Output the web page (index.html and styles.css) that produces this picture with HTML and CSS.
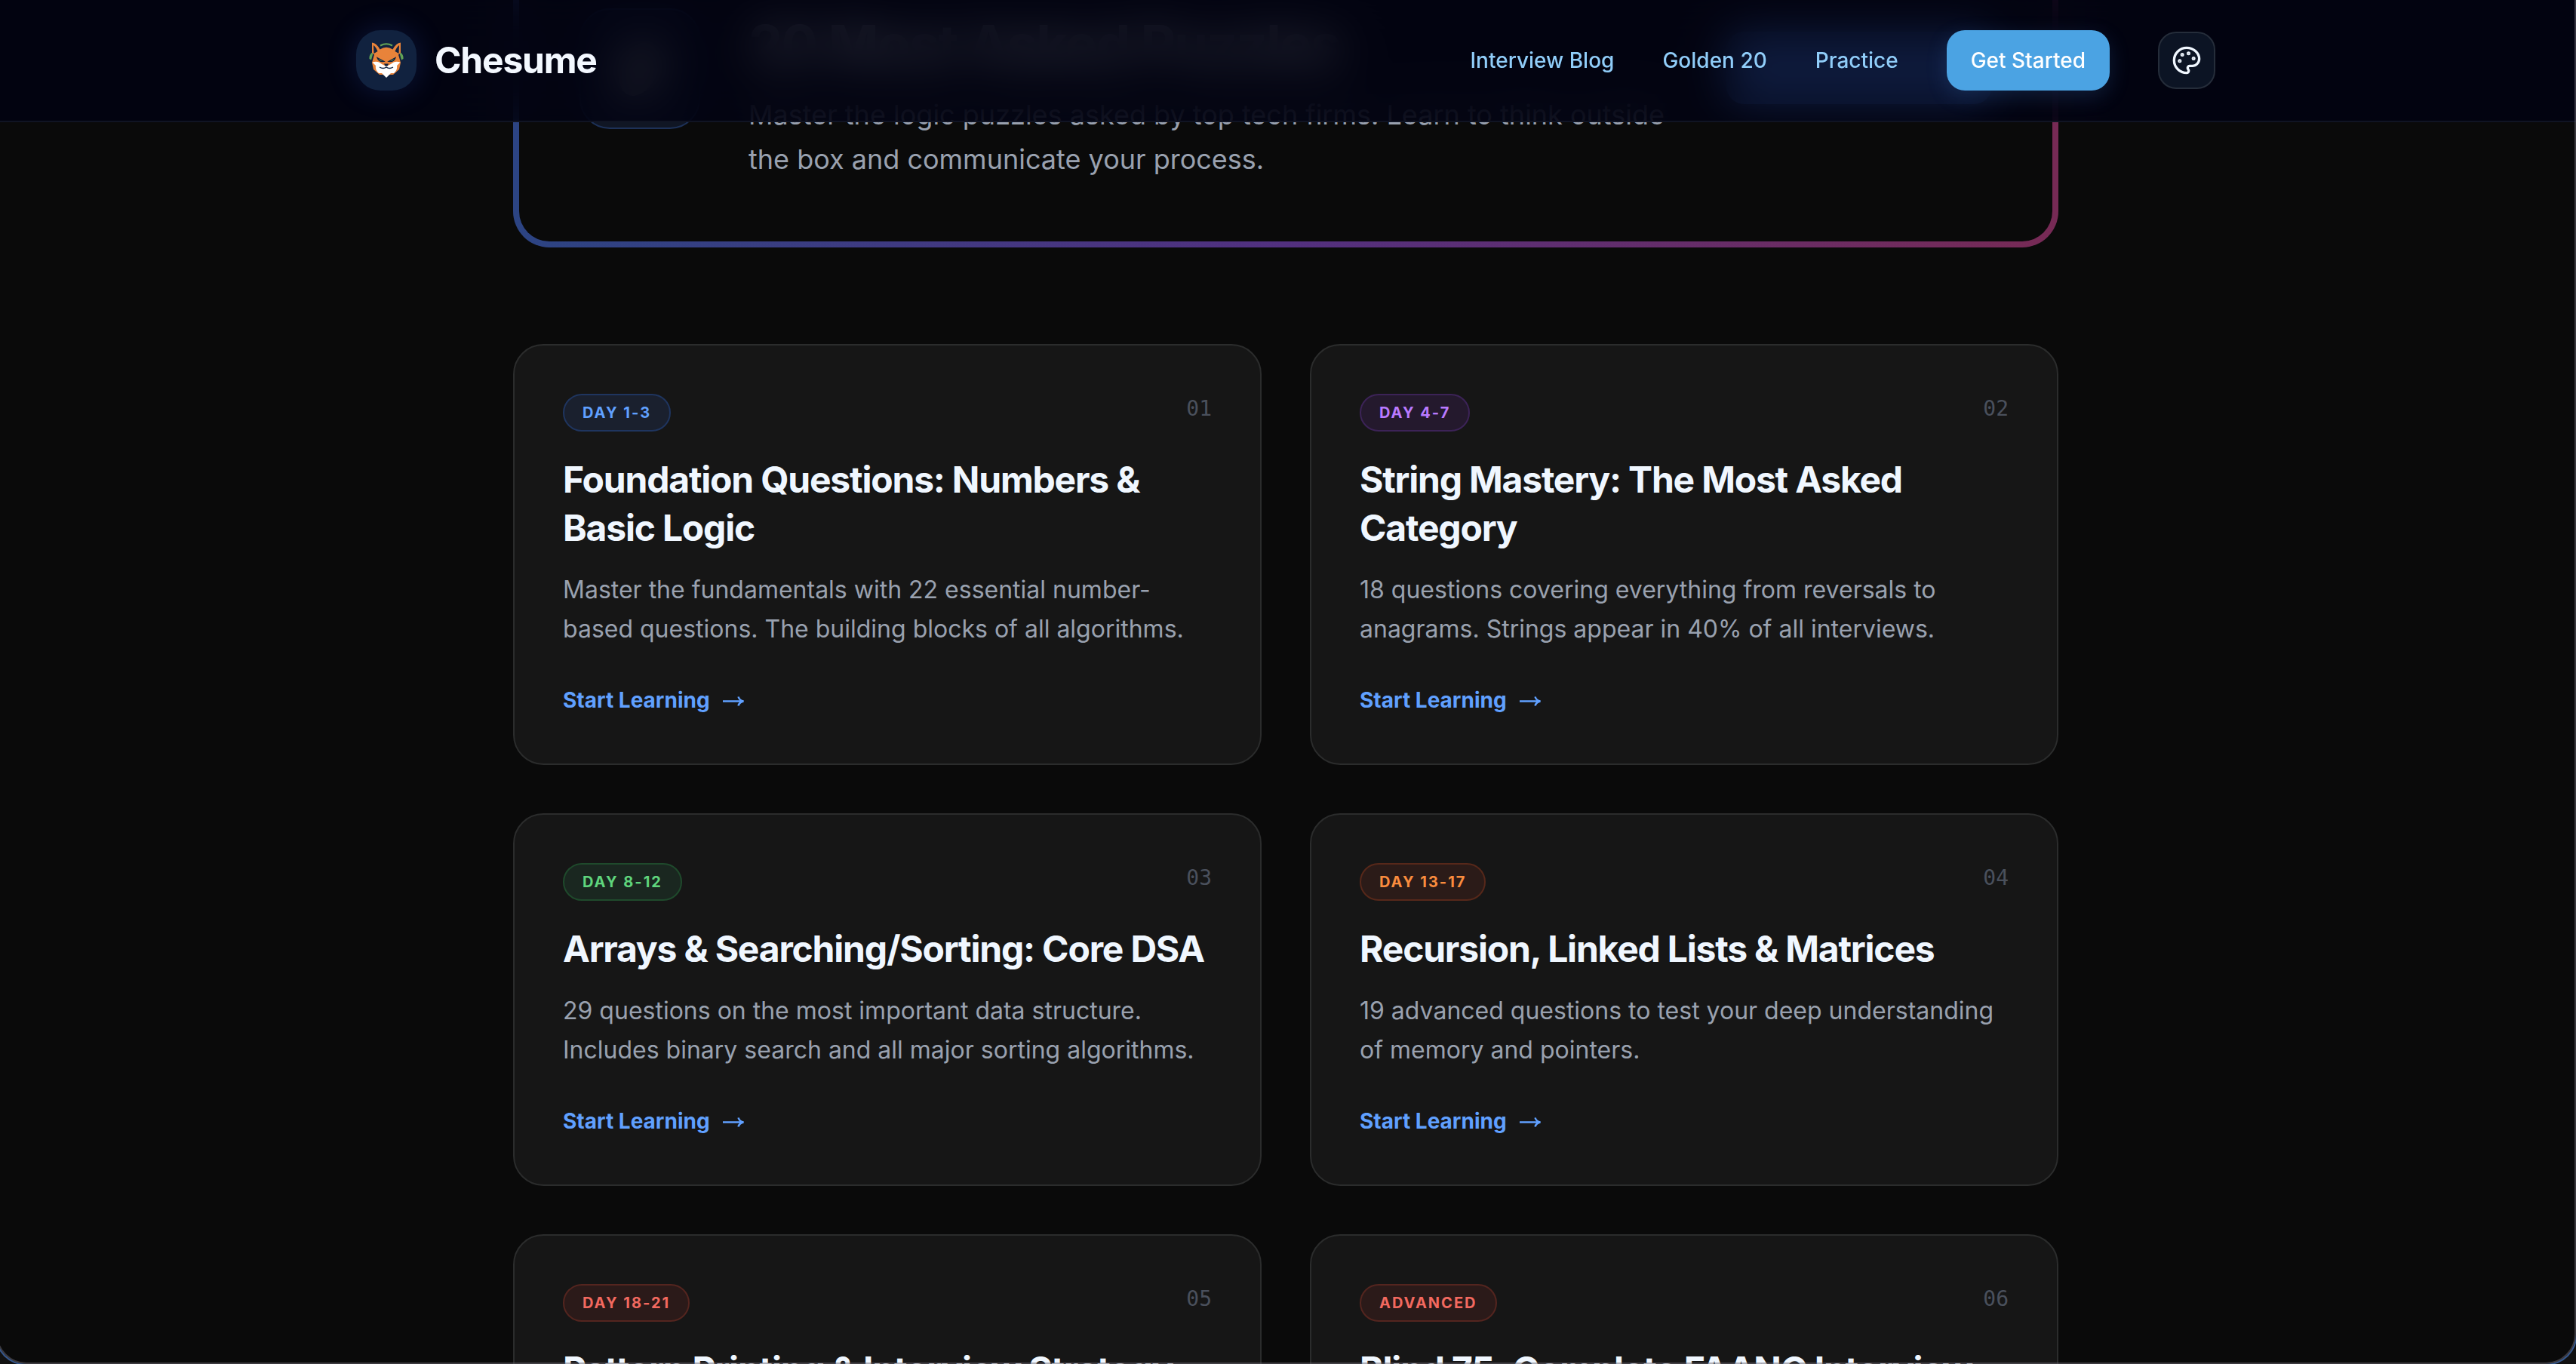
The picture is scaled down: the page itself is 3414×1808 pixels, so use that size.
FILE: index.html
```html
<!DOCTYPE html>
<html lang="en">
<head>
    <meta charset="UTF-8">
    <title>Chesume</title>
    <link rel="stylesheet" href="styles.css">
</head>
<body>
<header class="header">
    <div class="header-inner">
        <a class="brand" href="#">
            <span class="logo">
                <svg viewBox="0 0 48 48" width="48" height="48">
                    <path d="M16 4.500Q24 0 32 4.500" fill="none" stroke="#63a355" stroke-width="2.200"/>
                    <path d="M4.500 14Q1 17 1.500 22L4 23.500L6.500 14.500zM43.500 14Q47 17 46.500 22L44 23.500L41.500 14.500z" fill="#63a355"/>
                    <path d="M5 0.500Q11 1 15.500 9.500Q24 4 32.500 9.500Q37 1 43 0.500V14L40 16.500L43 27L41 36L33 43H15L7 36L5 27L8 16.500L5 14z" fill="#e8833a"/>
                    <path d="M7 4Q10 6 12.500 12L7.500 15zM41 4Q38 6 35.500 12L40.500 15z" fill="#11223f"/>
                    <path d="M5.500 26.500Q13 24 18 29L24 32L30 29Q35 24 42.500 26.500L38 31Q39 37 34 41L30 41L24 47L18 41L14 41Q9 37 10 31z" fill="#fff"/>
                    <path d="M12 20.500L21 25.500Q14 26.500 12 20.500zM36 20.500L27 25.500Q34 26.500 36 20.500z" fill="#63a355" stroke="#11223f" stroke-width="1.200"/>
                    <path d="M21 28.500H27L25.500 31.500H22.500z" fill="#11223f"/>
                    <path d="M15 33Q20 36 24 33Q28 36 33 33" fill="none" stroke="#11223f" stroke-width="1.300"/>
                </svg>
            </span>
            <span class="brand-name">Chesume</span>
        </a>
        <nav class="nav">
            <a href="#">Interview Blog</a>
            <a href="#">Golden 20</a>
            <a href="#">Practice</a>
            <a href="#" class="btn-start">Get Started</a>
            <button class="btn-theme" aria-label="Theme">
                <svg viewBox="0 0 24 24" width="40" height="40" fill="none" stroke="currentColor" stroke-width="2" stroke-linecap="round" stroke-linejoin="round">
                    <circle cx="13.500" cy="6.500" r=".5" fill="currentColor"/>
                    <circle cx="17.500" cy="10.500" r=".5" fill="currentColor"/>
                    <circle cx="8.500" cy="7.500" r=".5" fill="currentColor"/>
                    <circle cx="6.500" cy="12.500" r=".5" fill="currentColor"/>
                    <path d="M12 2C6.500 2 2 6.500 2 12s4.500 10 10 10c.926 0 1.648-.746 1.648-1.688 0-.437-.18-.835-.437-1.125-.29-.289-.438-.652-.438-1.125a1.640 1.640 0 0 1 1.668-1.668h1.996c3.051 0 5.555-2.503 5.555-5.554C21.965 6.012 17.461 2 12 2z"/>
                </svg>
            </button>
        </nav>
    </div>
</header>

<main class="content">
    <section class="hero">
        <div class="hero-inner">
            <div class="hero-icon"><span></span></div>
            <div class="hero-text">
                <h2>20 Most Asked Puzzles</h2>
                <p>Master the logic puzzles asked by top tech firms. Learn to think outside the box and communicate your process.</p>
            </div>
            <div class="hero-btn"></div>
        </div>
    </section>

    <section class="grid">
        <article class="card">
            <div class="card-top">
                <span class="badge blue">DAY 1-3</span>
                <span class="num">01</span>
            </div>
            <h3>Foundation Questions: Numbers &amp; Basic Logic</h3>
            <p>Master the fundamentals with 22 essential number-based questions. The building blocks of all algorithms.</p>
            <a class="more" href="#">Start Learning <svg viewBox="0 0 30 20"><path d="M1 11.500H28M21.500 5.500Q23 10.500 28.500 11.500Q23 12.500 21.500 17.500"/></svg></a>
        </article>
        <article class="card">
            <div class="card-top">
                <span class="badge purple">DAY 4-7</span>
                <span class="num">02</span>
            </div>
            <h3>String Mastery: The Most Asked Category</h3>
            <p>18 questions covering everything from reversals to anagrams. Strings appear in 40% of all interviews.</p>
            <a class="more" href="#">Start Learning <svg viewBox="0 0 30 20"><path d="M1 11.500H28M21.500 5.500Q23 10.500 28.500 11.500Q23 12.500 21.500 17.500"/></svg></a>
        </article>
        <article class="card">
            <div class="card-top">
                <span class="badge green">DAY 8-12</span>
                <span class="num">03</span>
            </div>
            <h3>Arrays &amp; Searching/Sorting: Core DSA</h3>
            <p>29 questions on the most important data structure. Includes binary search and all major sorting algorithms.</p>
            <a class="more" href="#">Start Learning <svg viewBox="0 0 30 20"><path d="M1 11.500H28M21.500 5.500Q23 10.500 28.500 11.500Q23 12.500 21.500 17.500"/></svg></a>
        </article>
        <article class="card">
            <div class="card-top">
                <span class="badge orange">DAY 13-17</span>
                <span class="num">04</span>
            </div>
            <h3>Recursion, Linked Lists &amp; Matrices</h3>
            <p>19 advanced questions to test your deep understanding of memory and pointers.</p>
            <a class="more" href="#">Start Learning <svg viewBox="0 0 30 20"><path d="M1 11.500H28M21.500 5.500Q23 10.500 28.500 11.500Q23 12.500 21.500 17.500"/></svg></a>
        </article>
        <article class="card">
            <div class="card-top">
                <span class="badge red">DAY 18-21</span>
                <span class="num">05</span>
            </div>
            <h3>Pattern Printing &amp; Interview Strategy</h3>
        </article>
        <article class="card">
            <div class="card-top">
                <span class="badge red">ADVANCED</span>
                <span class="num">06</span>
            </div>
            <h3>Blind 75: Complete FAANG Interview</h3>
        </article>
    </section>
</main>
<div class="frame"></div>
</body>
</html>
```
FILE: styles.css
```css
* {
    box-sizing: border-box;
}

html, body {
    height: 1808px;
    overflow: hidden;
}

body {
    margin: 0;
    background: #0a0a0a;
    color: #f0f7ff;
    font-family: Inter, "Liberation Sans", sans-serif;
}

h2, h3, p {
    margin: 0;
}

a {
    text-decoration: none;
}

.header {
    position: fixed;
    top: 0;
    left: 0;
    right: 0;
    z-index: 10;
    height: 162px;
    background: rgba(1, 3, 18, .82);
    border-bottom: 2px solid #101423;
    -webkit-backdrop-filter: blur(30px);
    backdrop-filter: blur(30px);
}

.header-inner {
    display: flex;
    align-items: center;
    justify-content: space-between;
    width: 2464px;
    height: 160px;
    margin-left: 472px;
}

.brand {
    display: flex;
    align-items: center;
    gap: 24px;
    color: #f3f8ff;
}

.logo {
    display: flex;
    align-items: center;
    justify-content: center;
    width: 80px;
    height: 80px;
    border-radius: 32px;
    background: #11223f;
    box-shadow: 0 0 40px rgba(59, 110, 246, .2);
}

.brand-name {
    padding-bottom: 2px;
    font-size: 48px;
    font-weight: 700;
    letter-spacing: -1.200px;
}

.nav {
    display: flex;
    align-items: center;
    gap: 64px;
    font-size: 28px;
    font-weight: 500;
}

.nav a {
    color: #90cdf9;
}

.nav .btn-start {
    height: 80px;
    padding: 0 32px;
    border-radius: 24px;
    background: #4ba3e3;
    box-shadow: 0 8px 28px rgba(75, 150, 240, .18);
    color: #fff;
    line-height: 80px;
}

.btn-theme {
    display: flex;
    align-items: center;
    justify-content: center;
    width: 76px;
    height: 76px;
    padding: 0;
    border: 2px solid #252d3a;
    border-radius: 24px;
    background: #0c1424;
    color: #f0f7ff;
}

.content {
    width: 2048px;
    margin-left: 680px;
}

.hero {
    height: 328px;
    padding: 0 8px 8px;
    border-radius: 0 0 48px 48px;
    background: linear-gradient(90deg, #2c4483, #52307f 50%, #772a55);
}

.hero-inner {
    display: flex;
    align-items: flex-end;
    height: 320px;
    padding: 0 80px 80px;
    border-radius: 0 0 40px 40px;
    background: #0a0a0a;
}

.hero-icon {
    display: flex;
    align-items: center;
    justify-content: center;
    width: 160px;
    height: 160px;
    margin: 0 64px 69px 0;
    border: 2px solid #1d3158;
    border-radius: 40px;
    background: #101624;
}

.hero-icon span {
    width: 48px;
    height: 76px;
    border-radius: 50%;
    background: #a0a090;
    transform: rotate(25deg);
}

.hero-text {
    width: 1240px;
}

.hero-text h2 {
    margin-bottom: 24px;
    font-size: 72px;
    font-weight: 700;
    line-height: 80px;
    letter-spacing: -1.800px;
}

.hero-text p {
    color: #99a1af;
    font-size: 36px;
    line-height: 58.500px;
}

.hero-btn {
    width: 352px;
    height: 96px;
    margin: 0 0 102px auto;
    border-radius: 24px;
    background: #4b8bff;
}

.grid {
    display: grid;
    grid-template-columns: 1fr 1fr;
    gap: 64px;
    margin-top: 128px;
}

.card {
    padding: 64px;
    border: 2px solid #2b2c2c;
    border-radius: 40px;
    background: #161616;
}

.card-top {
    display: flex;
    align-items: flex-start;
    justify-content: space-between;
    margin-bottom: 32px;
}

.badge {
    padding: 8px 24px;
    border: 2px solid;
    border-radius: 25px;
    font-size: 20px;
    font-weight: 700;
    line-height: 30px;
    letter-spacing: 2px;
}

.blue {
    border-color: #1f355f;
    background: #1a202e;
    color: #60a0ff;
}

.purple {
    border-color: #3c2357;
    background: #24192d;
    color: #b97aff;
}

.green {
    border-color: #1f4a2c;
    background: #1a2720;
    color: #5fd47c;
}

.orange {
    border-color: #57281a;
    background: #2b1b18;
    color: #f98c3e;
}

.red {
    border-color: #54251f;
    background: #2b1a19;
    color: #f2695f;
}

.num {
    color: #4a505c;
    font-family: "DejaVu Sans Mono", monospace;
    font-size: 28px;
    line-height: 40px;
}

.card h3 {
    margin-bottom: 24px;
    font-size: 48px;
    font-weight: 700;
    line-height: 64px;
    letter-spacing: -1.200px;
}

.card p {
    margin-bottom: 48px;
    color: #99a1af;
    font-size: 32px;
    line-height: 52px;
}

.more {
    display: flex;
    align-items: center;
    gap: 16px;
    color: #60a0ff;
    font-size: 28px;
    font-weight: 700;
    line-height: 40px;
}

.more svg {
    width: 30px;
    height: 20px;
    fill: none;
    stroke: currentColor;
    stroke-width: 2.500;
}

/* rounded outline along the window edge */
.frame {
    position: fixed;
    top: -60px;
    right: 0;
    bottom: 0;
    left: -5px;
    z-index: 20;
    border: 2px solid rgba(110, 105, 115, .5);
    border-radius: 40px;
    box-shadow: 0 0 0 2px #35588f, 0 0 0 40px #111;
    pointer-events: none;
}
```
